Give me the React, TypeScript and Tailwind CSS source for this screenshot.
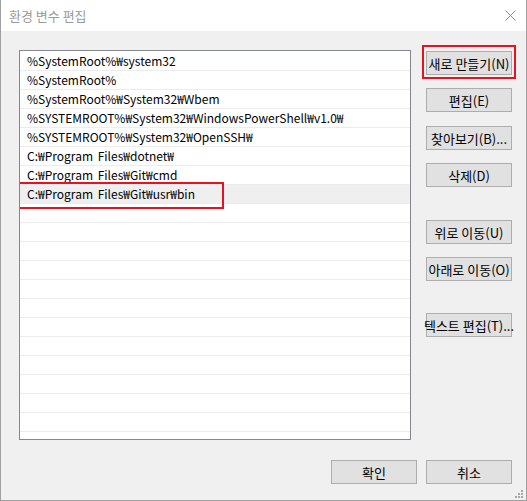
import React from "react";

const items = [
  "%SystemRoot%₩system32",
  "%SystemRoot%",
  "%SystemRoot%₩System32₩Wbem",
  "%SYSTEMROOT%₩System32₩WindowsPowerShell₩v1.0₩",
  "%SYSTEMROOT%₩System32₩OpenSSH₩",
  "C:₩Program Files₩dotnet₩",
  "C:₩Program Files₩Git₩cmd",
  "C:₩Program Files₩Git₩usr₩bin",
];

const font = { fontFamily: '"Noto Sans CJK KR", "Noto Sans", sans-serif' };

function Btn({ label, className = "" }: { label: string; className?: string }) {
  return (
    <div
      className={
        "w-[86px] h-[24px] bg-[#e1e1e1] border border-[#adadad] flex items-center justify-center text-[13px] text-black leading-none whitespace-nowrap " +
        className
      }
    >
      {label}
    </div>
  );
}

export default function App() {
  const rows = Array.from({ length: 21 }, (_, i) => items[i] ?? "");
  return (
    <div
      className="w-[527px] h-[501px] flex flex-col border-l border-r border-b border-[#a0a0a0] bg-[#f0f0f0] relative overflow-hidden"
      style={font}
    >
      {/* title bar */}
      <div className="h-[31px] bg-white flex items-center justify-between pl-[8px] pr-[10px] shrink-0">
        <span className="text-[13px] text-[#9a9a9a] leading-none">환경 변수 편집</span>
        <svg width="11" height="11" viewBox="0 0 11 11">
          <path d="M0.5 0.5 L10.5 10.5 M10.5 0.5 L0.5 10.5" stroke="#8a8a8a" strokeWidth="1" fill="none" />
        </svg>
      </div>

      {/* body */}
      <div className="flex-1 flex flex-col pl-[18px] pr-[14px]">
        <div className="flex flex-row mt-[19px]">
          {/* list */}
          <div className="relative w-[392px] h-[390px] border border-[#828790] bg-white pt-[1px] overflow-hidden shrink-0">
            {rows.map((t, i) => (
              <div
                key={i}
                className={
                  "h-[19px] border-b border-[#ececec] pl-[7px] flex items-center text-[12px] text-black leading-none whitespace-nowrap [word-spacing:2px] " +
                  (i === 7 ? "bg-[#efefef]" : "")
                }
              >
                {t}
              </div>
            ))}
            <div className="absolute left-[-2px] top-[131px] w-[206px] h-[27px] border-2 border-[#e3141f]" />
          </div>

          {/* buttons */}
          <div className="flex flex-col ml-[15px] relative">
            <Btn label="새로 만들기(N)" className="mt-[1px]" />
            <Btn label="편집(E)" className="mt-[13px]" />
            <Btn label="찾아보기(B)..." className="mt-[14px]" />
            <Btn label="삭제(D)" className="mt-[13px]" />
            <Btn label="위로 이동(U)" className="mt-[33px]" />
            <Btn label="아래로 이동(O)" className="mt-[13px]" />
            <Btn label="텍스트 편집(T)..." className="mt-[32px]" />
            <div className="absolute left-[-4px] top-[-5px] w-[94px] h-[34px] border-2 border-[#e3141f]" />
          </div>
        </div>

        <div className="flex flex-row justify-end gap-[9px] mt-[20px]">
          <Btn label="확인" />
          <Btn label="취소" />
        </div>
      </div>

      {/* resize grip */}
      <svg className="absolute right-[3px] bottom-[2px]" width="8" height="8" viewBox="0 0 8 8">
        <rect x="6" y="0" width="2" height="2" fill="#a8a8a8" />
        <rect x="3" y="3" width="2" height="2" fill="#a8a8a8" />
        <rect x="6" y="3" width="2" height="2" fill="#a8a8a8" />
        <rect x="0" y="6" width="2" height="2" fill="#a8a8a8" />
        <rect x="3" y="6" width="2" height="2" fill="#a8a8a8" />
        <rect x="6" y="6" width="2" height="2" fill="#a8a8a8" />
      </svg>
    </div>
  );
}
